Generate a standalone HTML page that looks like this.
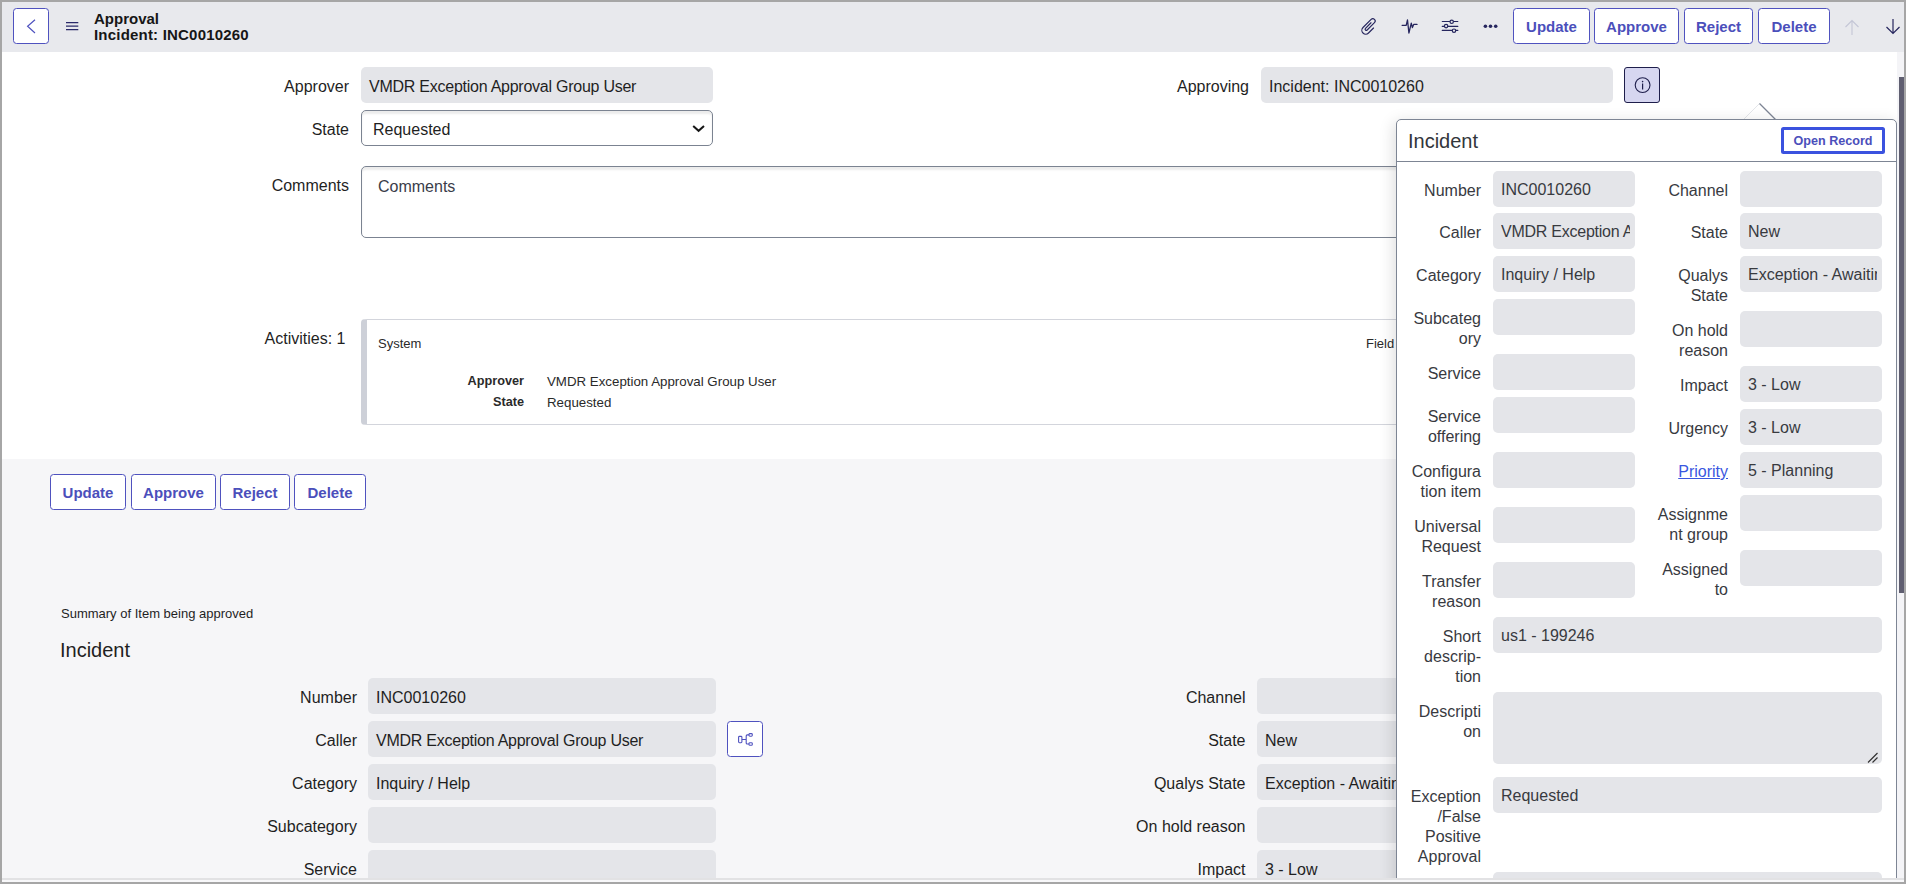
<!DOCTYPE html>
<html><head><meta charset="utf-8">
<style>
*{box-sizing:border-box;margin:0;padding:0}
html,body{width:1906px;height:884px;overflow:hidden;background:#a6a6a6;font-family:"Liberation Sans",sans-serif;color:#1f1f1f}
#frame{position:absolute;left:2px;top:2px;width:1902px;height:880px;background:#f8f8fa;overflow:hidden}
#content{position:absolute;left:0;top:0;width:1902px;height:876px;background:#fff;overflow:hidden}
#hstrip{position:absolute;left:0;top:876px;width:1902px;height:2px;background:#e2e2e4}
.abs{position:absolute}
/* header */
#hdr{position:absolute;left:0;top:0;width:1902px;height:50px;background:#e8e9ed}
.btn{position:absolute;height:36px;border:1px solid #4f52bf;border-radius:3.5px;background:#fff;color:#4b4fbb;font-weight:bold;font-size:15px;line-height:34px;padding-top:1px;text-align:center;white-space:nowrap}
.lbl{position:absolute;margin-top:1px;font-size:16px;line-height:20px;text-align:right;white-space:nowrap;color:#1f1f1f}
.ro{position:absolute;height:36px;background:#e4e5e9;border-radius:5px;font-size:16px;line-height:36px;padding-top:2px;padding-left:8px;white-space:nowrap;overflow:hidden;color:#1f1f1f}
#lower{position:absolute;left:0;top:457px;width:1902px;height:420px;background:#f6f6f8}
/* popover */
#pop{position:absolute;left:1394px;top:117px;width:501px;height:800px;background:#fff;border:1px solid #7d8594;border-radius:5px;box-shadow:-2px 3px 16px rgba(0,0,0,0.14)}
.plbl{position:absolute;margin-top:1px;font-size:16px;line-height:20px;text-align:right;white-space:nowrap;color:#383a3f}
.pro{position:absolute;height:36px;background:#e4e5e9;border-radius:5px;font-size:16px;line-height:36px;padding-top:1px;padding-left:8px;padding-right:5px;white-space:nowrap;overflow:hidden;color:#383a3f}
</style></head>
<body>
<div id="frame">
<div id="content">
  <div id="hdr">
    <div class="abs" style="left:11px;top:6px;width:36px;height:36px;border:1px solid #4f52bf;border-radius:3.5px;background:#fff"></div>
    <svg class="abs" style="left:11px;top:6px" width="36" height="36"><path d="M22 11.7 L14.6 18.3 L22 25" fill="none" stroke="#4f52bf" stroke-width="1.2"/></svg>
    <svg class="abs" style="left:62px;top:17px" width="16" height="14"><path d="M2 3.5H14.3M2 7H14.3M2 10.5H14.3" stroke="#2a2a6a" stroke-width="1.25"/></svg>
    <div class="abs" style="left:92px;top:9px;font-weight:bold;font-size:15px;line-height:15.5px;color:#161616">Approval<br><span style="letter-spacing:0.2px">Incident: INC0010260</span></div>
    <!-- icons -->
    <svg class="abs" style="left:1354px;top:12px" width="25" height="24" viewBox="0 0 25 24"><path transform="rotate(45)" d="M22.3 -2.5 L22.3 4.6 A3.9 3.9 0 0 1 14.5 4.6 L14.5 -6.9 A2.35 2.35 0 0 1 19.2 -6.9 L19.2 3.4 A1.2 1.2 0 0 1 16.8 3.4 L16.8 -4.4" fill="none" stroke="#26265e" stroke-width="1.15" stroke-linecap="round"/></svg>
    <svg class="abs" style="left:1396px;top:12px" width="24" height="24" viewBox="0 0 24 24"><path d="M4.1 11.3 H8.2 L9.5 6 L10.9 19 L13.3 9.2 L14.4 13.6 L15.7 10.4 H19" fill="none" stroke="#26265e" stroke-width="1.3" stroke-linejoin="round" stroke-linecap="round"/></svg>
    <svg class="abs" style="left:1436px;top:12px" width="24" height="24" viewBox="0 0 24 24"><g stroke="#26265e" stroke-width="1.2" stroke-linecap="round"><path d="M4.3 7.5 H19.8 M4.3 12.4 H19.8 M4.3 16.4 H19.8" fill="none"/><circle cx="13.7" cy="7.8" r="1.7" fill="#e8e9ed"/><circle cx="8.1" cy="12.1" r="1.7" fill="#e8e9ed"/><circle cx="16" cy="16.7" r="1.7" fill="#e8e9ed"/></g></svg>
    <svg class="abs" style="left:1480px;top:20px" width="18" height="10" viewBox="0 0 18 10"><g fill="#26265e"><circle cx="3.4" cy="4.3" r="1.8"/><circle cx="8.5" cy="4.3" r="1.8"/><circle cx="13.7" cy="4.3" r="1.8"/></g></svg>
    <div class="btn" style="left:1511px;top:6px;width:77px">Update</div>
    <div class="btn" style="left:1592px;top:6px;width:85px">Approve</div>
    <div class="btn" style="left:1682px;top:6px;width:69px">Reject</div>
    <div class="btn" style="left:1756px;top:6px;width:72px">Delete</div>
    <svg class="abs" style="left:1841px;top:16px" width="18" height="18" viewBox="0 0 18 18"><path d="M9 2.5 V17 M2.5 9 L9 2.5 L15.5 9" fill="none" stroke="#c4c6d6" stroke-width="1.1"/></svg>
    <svg class="abs" style="left:1882px;top:16px" width="18" height="18" viewBox="0 0 18 18"><path d="M9 1 V15.5 M2.5 9 L9 15.5 L15.5 9" fill="none" stroke="#26265e" stroke-width="1.2"/></svg>
  </div>

  <!-- main form -->
  <div class="lbl" style="right:1555px;top:74px">Approver</div>
  <div class="ro" style="left:359px;top:65px;width:352px"><span style="letter-spacing:-0.25px">VMDR Exception Approval Group User</span></div>
  <div class="lbl" style="right:1555px;top:117px">State</div>
  <div class="abs" style="left:359px;top:108px;width:352px;height:36px;border:1px solid #7b8391;border-radius:5px;box-shadow:inset 0 3px 2px rgba(0,0,0,0.075);font-size:16px;line-height:34px;padding-top:2px;padding-left:11px">Requested</div>
  <svg class="abs" style="left:688px;top:120px" width="16" height="12" viewBox="0 0 16 12"><path d="M3.2 4 L8.6 8.8 L14 4" fill="none" stroke="#161616" stroke-width="2"/></svg>
  <div class="lbl" style="right:1555px;top:173px">Comments</div>
  <div class="abs" style="left:359px;top:164px;width:1520px;height:72px;border:1px solid #7b8391;border-radius:5px;box-shadow:inset 0 3px 2px rgba(0,0,0,0.075);font-size:16px;line-height:20px;padding:9.5px 0 0 16px;color:#3a3d4a">Comments</div>
  <div class="lbl" style="right:655px;top:74px">Approving</div>
  <div class="ro" style="left:1259px;top:65px;width:352px">Incident: INC0010260</div>
  <div class="abs" style="left:1622px;top:65px;width:36px;height:36px;border:1.3px solid #1e1e4b;border-radius:3px;background:#d6d6f0"></div>
  <svg class="abs" style="left:1632px;top:75px" width="18" height="18" viewBox="0 0 18 18"><circle cx="8.6" cy="8.1" r="7.4" fill="none" stroke="#1e1e4b" stroke-width="1.1"/><path d="M8.6 6.6 V12.4" stroke="#1e1e4b" stroke-width="1.2"/><circle cx="8.6" cy="4.6" r="0.8" fill="#1e1e4b"/></svg>
  <div class="lbl" style="right:1558.5px;top:326px">Activities: 1</div>
  <div class="abs" style="left:359px;top:317px;width:1520px;height:106px;border:1px solid #d3d5dc;border-left:6px solid #cdd0d8;border-radius:4px"></div>
  <div class="abs" style="left:376px;top:334px;font-size:13px;line-height:16px;color:#2a2a2a">System</div>
  <div class="abs" style="left:1364px;top:334px;font-size:13px;line-height:16px;color:#2a2a2a">Field changes</div>
  <div class="abs" style="right:1380px;top:369px;font-size:12.7px;line-height:21px;font-weight:bold;text-align:right;color:#2a2a2a">Approver<br>State</div>
  <div class="abs" style="left:545px;top:369px;font-size:13.3px;line-height:21px;color:#2a2a2a">VMDR Exception Approval Group User<br>Requested</div>

  <div id="lower"></div>
  <div class="btn" style="left:48px;top:472px;width:76px">Update</div>
  <div class="btn" style="left:129px;top:472px;width:85px">Approve</div>
  <div class="btn" style="left:218px;top:472px;width:70px">Reject</div>
  <div class="btn" style="left:292px;top:472px;width:72px">Delete</div>
  <div class="abs" style="left:59px;top:604px;font-size:13px;line-height:16px;color:#1f1f1f">Summary of Item being approved</div>
  <div class="abs" style="left:58px;top:636px;font-size:20px;line-height:24px;color:#1f1f1f">Incident</div>
  <div class="lbl" style="right:1547px;top:685px">Number</div>
  <div class="ro" style="left:366px;top:676px;width:348px">INC0010260</div>
  <div class="lbl" style="right:1547px;top:728px">Caller</div>
  <div class="ro" style="left:366px;top:719px;width:348px"><span style="letter-spacing:-0.25px">VMDR Exception Approval Group User</span></div>
  <div class="lbl" style="right:1547px;top:771px">Category</div>
  <div class="ro" style="left:366px;top:762px;width:348px">Inquiry / Help</div>
  <div class="lbl" style="right:1547px;top:814px">Subcategory</div>
  <div class="ro" style="left:366px;top:805px;width:348px"></div>
  <div class="lbl" style="right:1547px;top:857px">Service</div>
  <div class="ro" style="left:366px;top:848px;width:348px"></div>
  <div class="lbl" style="right:658.5px;top:685px">Channel</div>
  <div class="ro" style="left:1255px;top:676px;width:348px"></div>
  <div class="lbl" style="right:658.5px;top:728px">State</div>
  <div class="ro" style="left:1255px;top:719px;width:348px">New</div>
  <div class="lbl" style="right:658.5px;top:771px">Qualys State</div>
  <div class="ro" style="left:1255px;top:762px;width:348px">Exception - Awaiting Exception Approval</div>
  <div class="lbl" style="right:658.5px;top:814px">On hold reason</div>
  <div class="ro" style="left:1255px;top:805px;width:348px"></div>
  <div class="lbl" style="right:658.5px;top:857px">Impact</div>
  <div class="ro" style="left:1255px;top:848px;width:348px">3 - Low</div>
  <div class="abs" style="left:725px;top:719px;width:36px;height:36px;border:1px solid #4f52bf;border-radius:3.5px;background:#fff"></div>
  <svg class="abs" style="left:735px;top:729px" width="18" height="18" viewBox="0 0 18 18"><g fill="none" stroke="#4f52bf" stroke-width="1.1"><rect x="1.6" y="5.4" width="3.3" height="6.3" rx="0.9"/><rect x="12" y="2.6" width="3.3" height="2.6" rx="0.9"/><rect x="12" y="11.7" width="3.3" height="2.6" rx="0.9"/><path d="M4.9 8.5 H9.2 M12 3.9 H10.2 Q9.2 3.9 9.2 4.9 V12 Q9.2 13 10.2 13 H12"/></g></svg>

  <!-- popover -->
  <svg class="abs" style="left:1739px;top:99px" width="40" height="20" viewBox="0 0 40 20"><path d="M2 19 L18.5 2.5 L35.5 19.5 Z" fill="#fff"/><path d="M2 19 L18.5 2.5" stroke="#e4e6ea" stroke-width="1" fill="none"/><path d="M18.5 2.5 L35.5 19.5" stroke="#7d8594" stroke-width="1.2" fill="none"/></svg>
  <div id="pop">
    <div class="abs" style="left:11px;top:9px;font-size:20px;line-height:24px;color:#33363b">Incident</div>
    <div class="abs" style="left:384px;top:7px;width:104px;height:27px;border:3px solid #3b52df;border-radius:2.5px;font-weight:bold;font-size:12.6px;line-height:21px;padding-top:1px;text-align:center;color:#4b4fbb">Open Record</div>
    <div class="abs" style="left:0;top:41px;width:499px;height:1px;background:#7d8594"></div>
    <div class="plbl" style="right:415px;top:60px">Number</div>
    <div class="pro" style="left:96px;top:51px;width:142px">INC0010260</div>
    <div class="plbl" style="right:415px;top:102px">Caller</div>
    <div class="pro" style="left:96px;top:93px;width:142px"><div style="overflow:hidden"><span style="letter-spacing:-0.25px">VMDR Exception Approval Group User</span></div></div>
    <div class="plbl" style="right:415px;top:145px">Category</div>
    <div class="pro" style="left:96px;top:136px;width:142px">Inquiry / Help</div>
    <div class="plbl" style="right:415px;top:188px">Subcateg<br>ory</div>
    <div class="pro" style="left:96px;top:179px;width:142px"></div>
    <div class="plbl" style="right:415px;top:243px">Service</div>
    <div class="pro" style="left:96px;top:234px;width:142px"></div>
    <div class="plbl" style="right:415px;top:286px">Service<br>offering</div>
    <div class="pro" style="left:96px;top:277px;width:142px"></div>
    <div class="plbl" style="right:415px;top:341px">Configura<br>tion item</div>
    <div class="pro" style="left:96px;top:332px;width:142px"></div>
    <div class="plbl" style="right:415px;top:396px">Universal<br>Request</div>
    <div class="pro" style="left:96px;top:387px;width:142px"></div>
    <div class="plbl" style="right:415px;top:451px">Transfer<br>reason</div>
    <div class="pro" style="left:96px;top:442px;width:142px"></div>
    <div class="plbl" style="right:168px;top:60px">Channel</div>
    <div class="pro" style="left:343px;top:51px;width:142px"></div>
    <div class="plbl" style="right:168px;top:102px">State</div>
    <div class="pro" style="left:343px;top:93px;width:142px">New</div>
    <div class="plbl" style="right:168px;top:145px">Qualys<br>State</div>
    <div class="pro" style="left:343px;top:136px;width:142px"><div style="overflow:hidden">Exception - Awaiting Exception Approval</div></div>
    <div class="plbl" style="right:168px;top:200px">On hold<br>reason</div>
    <div class="pro" style="left:343px;top:191px;width:142px"></div>
    <div class="plbl" style="right:168px;top:255px">Impact</div>
    <div class="pro" style="left:343px;top:246px;width:142px">3 - Low</div>
    <div class="plbl" style="right:168px;top:298px">Urgency</div>
    <div class="pro" style="left:343px;top:289px;width:142px">3 - Low</div>
    <div class="plbl" style="right:168px;top:341px"><span style="color:#3a57e0;text-decoration:underline">Priority</span></div>
    <div class="pro" style="left:343px;top:332px;width:142px">5 - Planning</div>
    <div class="plbl" style="right:168px;top:384px">Assignme<br>nt group</div>
    <div class="pro" style="left:343px;top:375px;width:142px"></div>
    <div class="plbl" style="right:168px;top:439px">Assigned<br>to</div>
    <div class="pro" style="left:343px;top:430px;width:142px"></div>
    <div class="plbl" style="right:415px;top:506px">Short<br>descrip-<br>tion</div>
    <div class="pro" style="left:96px;top:497px;width:389px;height:36px">us1 - 199246</div>
    <div class="plbl" style="right:415px;top:581px">Descripti<br>on</div>
    <div class="pro" style="left:96px;top:572px;width:389px;height:72px"></div>
    <div class="plbl" style="right:415px;top:666px">Exception<br>/False<br>Positive<br>Approval</div>
    <div class="pro" style="left:96px;top:657px;width:389px;height:36px">Requested</div>
    <div class="plbl" style="right:415px;top:761px"></div>
    <div class="pro" style="left:96px;top:752px;width:389px;height:36px"></div>
    <svg class="abs" style="left:470px;top:632px" width="12" height="12" viewBox="0 0 12 12"><path d="M1 10.5 L10.5 1 M5.5 10.5 L10.5 5.5" stroke="#333" stroke-width="1.2"/></svg>
  </div>
  <!-- scrollbar -->
  <div class="abs" style="left:1895px;top:50px;width:7px;height:826px;background:#f4f4f7"></div>
  <div class="abs" style="left:1897px;top:75px;width:5px;height:516px;background:#5f5e70"></div>
</div>
<div id="hstrip"></div>
</div>
</body></html>
